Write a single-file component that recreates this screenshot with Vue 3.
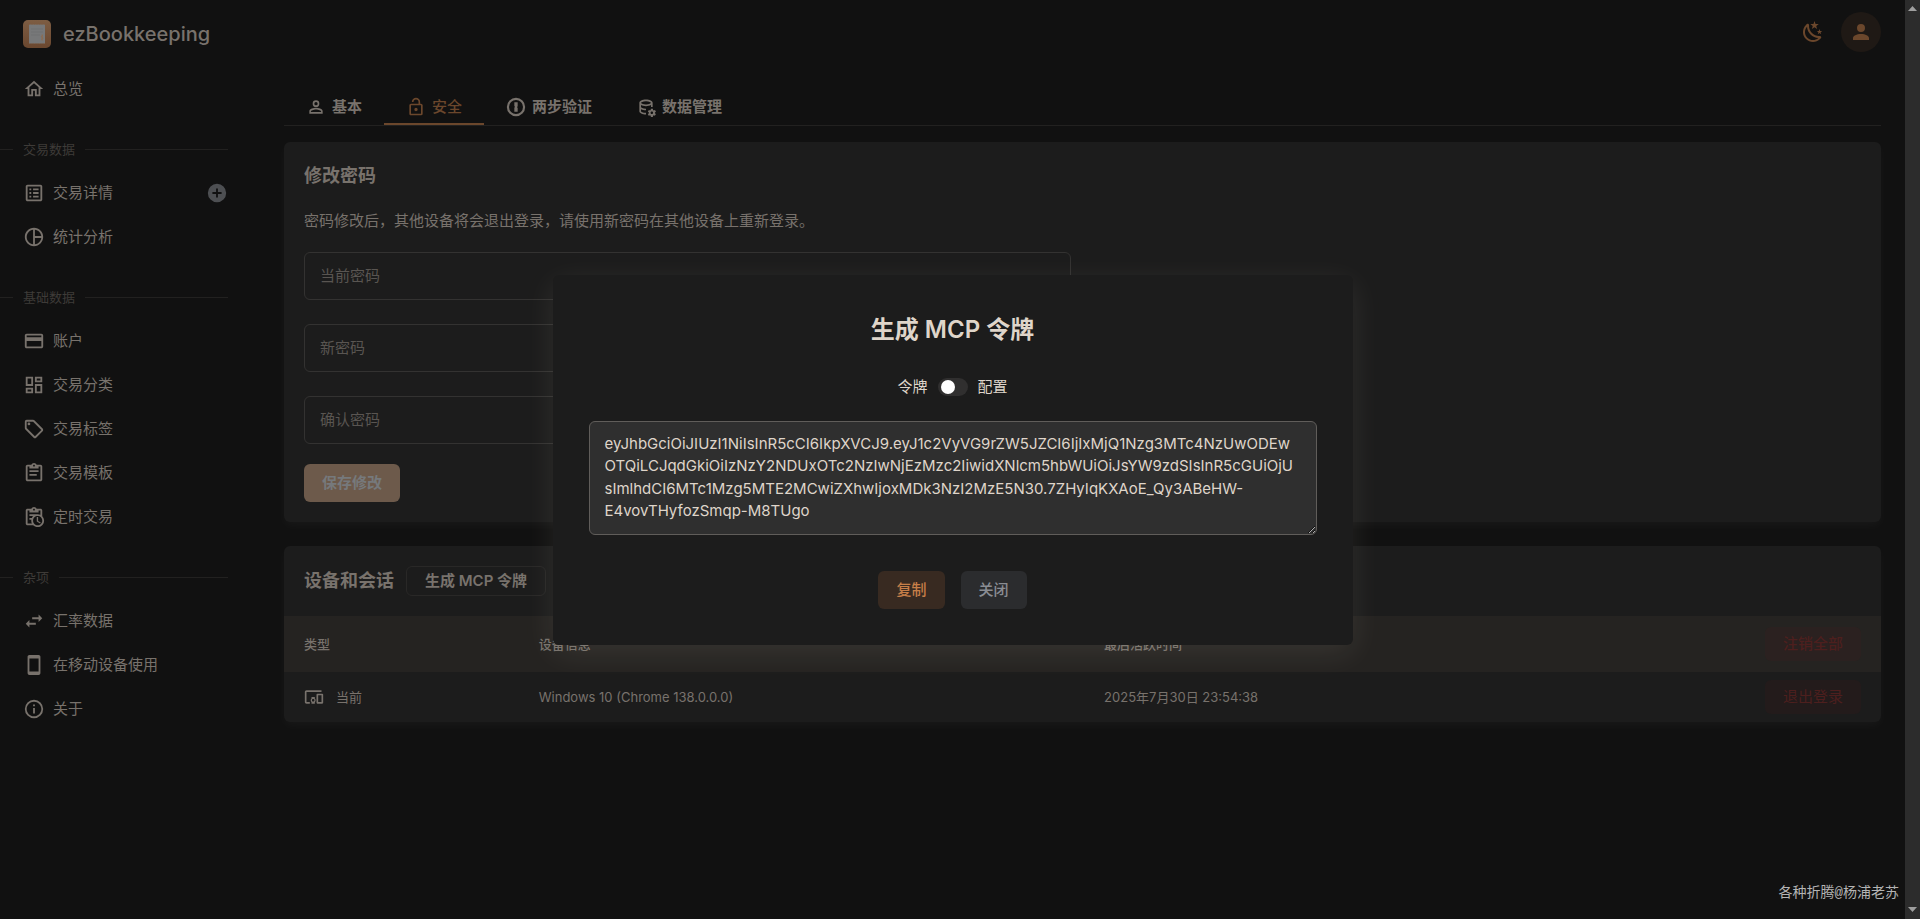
<script setup>
import { ref } from 'vue'

const icons = {
  home: 'M12 5.69L17 10.19V18H15V12H9V18H7V10.19L12 5.69M12 3L2 12H5V20H11V14H13V20H19V12H22L12 3',
  list: 'M11 15H17V17H11V15M9 7H7V9H9V7M11 13H17V11H11V13M11 9H17V7H11V9M9 11H7V13H9V11M21 5V19C21 20.1 20.1 21 19 21H5C3.89 21 3 20.1 3 19V5C3 3.9 3.9 3 5 3H19C20.1 3 21 3.9 21 5M19 5H5V19H19V5M9 15H7V17H9V15Z',
  pie: 'M12 2C6.48 2 2 6.48 2 12S6.48 22 12 22 22 17.52 22 12 17.52 2 12 2M13 4.07C16.61 4.52 19.5 7.39 19.93 11H13V4.07M4 12C4 7.94 7.07 4.56 11 4.07V19.93C7.07 19.44 4 16.06 4 12M13 19.93V13H19.93C19.5 16.61 16.64 19.5 13 19.93Z',
  card: 'M20 8H4V6H20M20 18H4V12H20M20 4H4C2.89 4 2 4.89 2 6V18C2 19.11 2.9 20 4 20H20C21.11 20 22 19.11 22 18V6C22 4.89 21.1 4 20 4Z',
  dashboard: 'M19 5V7H15V5H19M9 5V11H5V5H9M19 13V19H15V13H19M9 17V19H5V17H9M21 3H13V9H21V3M11 3H3V13H11V3M21 11H13V21H21V11M11 15H3V21H11V15Z',
  tag: 'M21.41 11.58L12.41 2.58A2 2 0 0 0 11 2H4A2 2 0 0 0 2 4V11A2 2 0 0 0 2.59 12.42L11.59 21.42A2 2 0 0 0 13 22A2 2 0 0 0 14.41 21.41L21.41 14.41A2 2 0 0 0 22 13A2 2 0 0 0 21.41 11.58M13 20L4 11V4H11L20 13M6.5 5A1.5 1.5 0 1 1 5 6.5A1.5 1.5 0 0 1 6.5 5Z',
  clipboard: 'M19 3H14.82C14.4 1.84 13.3 1 12 1S9.6 1.84 9.18 3H5C3.9 3 3 3.9 3 5V19C3 20.1 3.9 21 5 21H19C20.1 21 21 20.1 21 19V5C21 3.9 20.1 3 19 3M12 3C12.55 3 13 3.45 13 4S12.55 5 12 5 11 4.55 11 4 11.45 3 12 3M7 7H17V5H19V19H5V5H7V7M17 11H7V9H17V11M15 15H7V13H15V15Z',
  clipboardClock: 'M21 11.11V5C21 3.9 20.11 3 19 3H14.82C14.4 1.84 13.3 1 12 1S9.6 1.84 9.18 3H5C3.9 3 3 3.9 3 5V19C3 20.11 3.9 21 5 21H11.11C12.37 22.24 14.09 23 16 23C19.87 23 23 19.87 23 16C23 14.09 22.24 12.37 21 11.11M12 3C12.55 3 13 3.45 13 4S12.55 5 12 5 11 4.55 11 4 11.45 3 12 3M5 19V5H7V7H17V5H19V9.68C18.09 9.25 17.08 9 16 9H7V11H11.1C10.5 11.57 10.04 12.25 9.68 13H7V15H9.08C9.03 15.33 9 15.66 9 16C9 17.08 9.25 18.09 9.68 19H5M16 21C13.24 21 11 18.76 11 16S13.24 11 16 11 21 13.24 21 16 18.76 21 16 21M16.5 16.25L19.36 17.94L18.61 19.16L15 17V12H16.5V16.25Z',
  swap: 'M21 9L17 5V8H10V10H17V13M7 11L3 15L7 19V16H14V14H7V11Z',
  phone: 'M17,19H7V5H17M17,1H7C5.89,1 5,1.89 5,3V21A2,2 0 0,0 7,23H17A2,2 0 0,0 19,21V3C19,1.89 18.1,1 17,1Z',
  info: 'M11,9H13V7H11M12,20C7.59,20 4,16.41 4,12C4,7.59 7.59,4 12,4C16.41,4 20,7.59 20,12C20,16.41 16.41,20 12,20M12,2A10,10 0 0,0 2,12A10,10 0 0,0 12,22A10,10 0 0,0 22,12A10,10 0 0,0 12,2M11,17H13V11H11V17Z',
  plus: 'M17,13H13V17H11V13H7V11H11V7H13V11H17M12,2A10,10 0 0,0 2,12A10,10 0 0,0 12,22A10,10 0 0,0 22,12A10,10 0 0,0 12,2Z',
  accountOutline: 'M12,4A4,4 0 0,1 16,8A4,4 0 0,1 12,12A4,4 0 0,1 8,8A4,4 0 0,1 12,4M12,6A2,2 0 0,0 10,8A2,2 0 0,0 12,10A2,2 0 0,0 14,8A2,2 0 0,0 12,6M12,13C14.67,13 20,14.33 20,17V20H4V17C4,14.33 9.33,13 12,13M12,14.9C9.03,14.9 5.9,16.36 5.9,17V18.1H18.1V17C18.1,16.36 14.97,14.9 12,14.9Z',
  lock: 'M18,20V10H6V20H18M18,8A2,2 0 0,1 20,10V20A2,2 0 0,1 18,22H6C4.89,22 4,21.1 4,20V10A2,2 0 0,1 6,8H15V6A3,3 0 0,0 12,3A3,3 0 0,0 9,6H7A5,5 0 0,1 12,1A5,5 0 0,1 17,6V8H18M12,17A2,2 0 0,1 10,15A2,2 0 0,1 12,13A2,2 0 0,1 14,15A2,2 0 0,1 12,17Z',
  key: 'M12 1A11 11 0 0 0 12 23A11 11 0 0 0 12 1M12 3.6A8.4 8.4 0 0 1 12 20.4A8.4 8.4 0 0 1 12 3.6M10 6.4V11L10.9 11.8L10 12.8V17.6H14V13L13.1 12.2L14 11.2V6.4Z',
  database: 'M4 7V17C4 19.21 7.59 21 12 21V19C8.13 19 6 17.5 6 17V14.77C7.5 15.55 9.6 16 12 16V14C8.13 14 6 12.5 6 12V9.64C7.47 10.47 9.61 11 12 11S16.53 10.47 18 9.64V12H20V7C20 4.79 16.42 3 12 3S4 4.79 4 7M18 7C18 7.5 15.87 9 12 9S6 7.5 6 7 8.13 5 12 5 18 6.5 18 7M23.8 20.4C23.9 20.4 23.9 20.5 23.8 20.6L22.8 22.3C22.7 22.4 22.6 22.4 22.5 22.4L21.3 22C21 22.2 20.8 22.3 20.5 22.5L20.3 23.8C20.3 23.9 20.2 24 20.1 24H18.1C18 24 17.9 23.9 17.8 23.8L17.6 22.5C17.3 22.4 17 22.2 16.8 22L15.6 22.5C15.5 22.5 15.4 22.5 15.3 22.4L14.3 20.7C14.2 20.6 14.3 20.5 14.4 20.4L15.5 19.6V18.6L14.4 17.8C14.3 17.7 14.3 17.6 14.3 17.5L15.3 15.8C15.4 15.7 15.5 15.7 15.6 15.7L16.8 16.2C17.1 16 17.3 15.9 17.6 15.7L17.8 14.4C17.8 14.3 17.9 14.2 18.1 14.2H20.1C20.2 14.2 20.3 14.3 20.3 14.4L20.5 15.7C20.8 15.8 21.1 16 21.4 16.2L22.6 15.7C22.7 15.7 22.9 15.7 22.9 15.8L23.9 17.5C24 17.6 23.9 17.7 23.8 17.8L22.7 18.6V19.6L23.8 20.4M20.5 19C20.5 18.2 19.8 17.5 19 17.5S17.5 18.2 17.5 19 18.2 20.5 19 20.5 20.5 19.8 20.5 19Z',
  devices: 'M3 6H21V4H3C1.9 4 1 4.9 1 6V18C1 19.1 1.9 20 3 20H7V18H3V6M13 12H9V13.78C8.39 14.33 8 15.11 8 16C8 16.89 8.39 17.67 9 18.22V20H13V18.22C13.61 17.67 14 16.88 14 16S13.61 14.33 13 13.78V12M11 17.5C10.17 17.5 9.5 16.83 9.5 16S10.17 14.5 11 14.5 12.5 15.17 12.5 16 11.83 17.5 11 17.5M22 8H16C15.5 8 15 8.5 15 9V19C15 19.5 15.5 20 16 20H22C22.5 20 23 19.5 23 19V9C23 8.5 22.5 8 22 8M21 18H17V10H21V18Z',
  night: 'M17.75,4.09L15.22,6.03L16.13,9.09L13.5,7.28L10.87,9.09L11.78,6.03L9.25,4.09L12.44,4L13.5,1L14.56,4L17.75,4.09M21.25,11L19.61,12.25L20.2,14.23L18.5,13.06L16.8,14.23L17.39,12.25L15.75,11L17.81,10.95L18.5,9L19.19,10.95L21.25,11M18.97,15.95C19.8,15.87 20.69,17.05 20.16,17.8C19.84,18.25 19.5,18.67 19.08,19.07C15.17,23 8.84,23 4.94,19.07C1.03,15.17 1.03,8.83 4.94,4.93C5.34,4.53 5.76,4.17 6.21,3.85C6.96,3.32 8.14,4.21 8.06,5.04C7.79,7.9 8.75,10.87 10.95,13.06C13.14,15.26 16.1,16.22 18.97,15.95M17.33,17.97C14.5,17.81 11.7,16.64 9.53,14.5C7.36,12.31 6.2,9.5 6.04,6.68C3.23,9.82 3.34,14.64 6.35,17.66C9.37,20.67 14.19,20.78 17.33,17.97Z',
  account: 'M12,4A4,4 0 0,1 16,8A4,4 0 0,1 12,12A4,4 0 0,1 8,8A4,4 0 0,1 12,4M12,14C16.42,14 20,15.79 20,18V20H4V18C4,15.79 7.58,14 12,14Z',
}

const sections = [
  { title: '', items: [{ icon: 'home', text: '总览' }] },
  {
    title: '交易数据',
    items: [
      { icon: 'list', text: '交易详情', add: true },
      { icon: 'pie', text: '统计分析' },
    ],
  },
  {
    title: '基础数据',
    items: [
      { icon: 'card', text: '账户' },
      { icon: 'dashboard', text: '交易分类' },
      { icon: 'tag', text: '交易标签' },
      { icon: 'clipboard', text: '交易模板' },
      { icon: 'clipboardClock', text: '定时交易' },
    ],
  },
  {
    title: '杂项',
    items: [
      { icon: 'swap', text: '汇率数据' },
      { icon: 'phone', text: '在移动设备使用' },
      { icon: 'info', text: '关于' },
    ],
  },
]

const tabs = [
  { icon: 'accountOutline', text: '基本' },
  { icon: 'lock', text: '安全' },
  { icon: 'key', text: '两步验证' },
  { icon: 'database', text: '数据管理' },
]
const activeTab = ref('安全')
const fields = ['当前密码', '新密码', '确认密码']
const showConfig = ref(false)
const token = ref(
  'eyJhbGciOiJIUzI1NiIsInR5cCI6IkpXVCJ9.eyJ1c2VyVG9rZW5JZCI6IjIxMjQ1Nzg3MTc4NzUwODEwOTQiLCJqdGkiOiIzNzY2NDUxOTc2NzIwNjEzMzc2IiwidXNlcm5hbWUiOiJsYW9zdSIsInR5cGUiOjUsImlhdCI6MTc1Mzg5MTE2MCwiZXhwIjoxMDk3NzI2MzE5N30.7ZHyIqKXAoE_Qy3ABeHW-E4vovTHyfozSmqp-M8TUgo'
)
</script>

<template>
  <div class="window">
    <div class="page">
      <aside class="sidebar">
        <div class="brand">
          <svg class="logo" viewBox="0 0 28 28" aria-hidden="true">
            <defs>
              <linearGradient id="logoFill" x1="0" y1="0" x2="0" y2="1">
                <stop offset="0" stop-color="#7d5d43" />
                <stop offset="1" stop-color="#6a472f" />
              </linearGradient>
            </defs>
            <rect width="28" height="28" rx="5" fill="url(#logoFill)" />
            <path d="M6 4.500H22V23.500H6Z" fill="#777879" />
            <path d="M6 4.500H22M6 23.500H22" stroke="#7d6350" stroke-dasharray="1 1.500" />
            <path d="M8 9H20M8 12H20M8 15H17" stroke="#707172" />
            <path d="M20 15.500C18 15.500 18 17.500 19.300 17.500S20 19.500 18 19.200M19.200 14.500V20.500" fill="none" stroke="#8d6c50" />
          </svg>
          <span class="brand-name">ezBookkeeping</span>
        </div>
        <nav>
          <template v-for="(section, i) in sections" :key="i">
            <div v-if="section.title" class="section-title">
              <span>{{ section.title }}</span>
            </div>
            <div v-for="item in section.items" :key="item.text" class="nav-row">
              <a href="#" class="nav-link">
                <svg class="icon-nav" viewBox="0 0 24 24" aria-hidden="true"><path :d="icons[item.icon]" /></svg>
                <span>{{ item.text }}</span>
              </a>
              <button v-if="item.add" class="add" type="button" aria-label="添加交易">
                <svg class="icon-nav" viewBox="0 0 24 24" aria-hidden="true"><path :d="icons.plus" /></svg>
              </button>
            </div>
          </template>
        </nav>
      </aside>

      <main class="main">
        <header class="topbar">
          <button class="theme" type="button" aria-label="主题">
            <svg class="icon-top" viewBox="0 0 24 24" aria-hidden="true"><path :d="icons.night" /></svg>
          </button>
          <button class="avatar" type="button" aria-label="用户">
            <svg class="icon-top" viewBox="0 0 24 24" aria-hidden="true"><path :d="icons.account" /></svg>
          </button>
        </header>

        <div class="tabs" role="tablist">
          <button
            v-for="tab in tabs"
            :key="tab.text"
            type="button"
            role="tab"
            class="tab"
            :class="{ active: tab.text === activeTab }"
            :aria-selected="tab.text === activeTab"
            @click="activeTab = tab.text"
          >
            <svg class="icon-tab" viewBox="0 0 24 24" aria-hidden="true"><path fill-rule="evenodd" :d="icons[tab.icon]" /></svg>
            <span>{{ tab.text }}</span>
          </button>
        </div>

        <section class="card password">
          <h2>修改密码</h2>
          <p>密码修改后，其他设备将会退出登录，请使用新密码在其他设备上重新登录。</p>
          <form class="fields" @submit.prevent>
            <input v-for="f in fields" :key="f" type="password" :placeholder="f" :aria-label="f" autocomplete="off" />
          </form>
          <button type="button" class="btn save">保存修改</button>
        </section>

        <section class="card">
          <div class="card-head">
            <h2>设备和会话</h2>
            <button type="button" class="generate">生成 MCP 令牌</button>
          </div>
          <table>
            <thead>
              <tr>
                <th class="col-type">类型</th>
                <th class="col-info">设备信息</th>
                <th>最后活跃时间</th>
                <th class="col-action"><button type="button" class="danger">注销全部</button></th>
              </tr>
            </thead>
            <tbody>
              <tr>
                <td>
                  <div class="device">
                    <svg class="icon-device" viewBox="0 0 24 24" aria-hidden="true"><path :d="icons.devices" /></svg>
                    <span>当前</span>
                  </div>
                </td>
                <td>Windows 10 (Chrome 138.0.0.0)</td>
                <td>2025年7月30日 23:54:38</td>
                <td class="col-action"><button type="button" class="danger">退出登录</button></td>
              </tr>
            </tbody>
          </table>
        </section>
      </main>

      <div class="overlay">
        <div class="dialog" role="dialog" aria-labelledby="dialogTitle">
          <h1 id="dialogTitle">生成 MCP 令牌</h1>
          <div class="switch-row">
            <span>令牌</span>
            <input id="showConfig" v-model="showConfig" type="checkbox" role="switch" />
            <label for="showConfig">配置</label>
          </div>
          <textarea v-model="token" aria-label="令牌" readonly spellcheck="false"></textarea>
          <div class="actions">
            <button type="button" class="btn copy">复制</button>
            <button type="button" class="btn close">关闭</button>
          </div>
        </div>
      </div>

      <div class="watermark">各种折腾@杨浦老苏</div>
    </div>

    <div class="scrollbar" aria-hidden="true">
      <svg viewBox="0 0 15 15"><path d="M3 11L7.500 6L12 11Z" /></svg>
      <svg viewBox="0 0 15 15"><path d="M3 3L7.500 8L12 3Z" /></svg>
    </div>
  </div>
</template>

<style>
body {
  background: #111111;
}
</style>

<style scoped>
.window,
.window * {
  box-sizing: border-box;
}
.window {
  display: flex;
  min-height: 100vh;
  background: #111111;
  color: #78726c;
  font-family: Inter, "Noto Sans CJK SC", sans-serif;
  font-size: 15px;
  line-height: 22px;
}
button,
input,
textarea {
  margin: 0;
  font: inherit;
  color: inherit;
}
button {
  padding: 0;
  border: 0;
  background: none;
  cursor: pointer;
}
h1,
h2,
p {
  margin: 0;
}
svg {
  display: block;
  flex: none;
  fill: currentColor;
}
.page {
  position: relative;
  display: flex;
  flex: 1;
  min-width: 0;
}

.sidebar {
  width: 260px;
  flex: none;
}
.brand {
  display: flex;
  align-items: center;
  gap: 12px;
  height: 67px;
  padding-left: 23px;
}
.logo {
  width: 28px;
  height: 28px;
}
.brand-name {
  font-size: 20px;
  font-weight: 500;
  line-height: 28px;
}
.section-title {
  display: flex;
  align-items: center;
  gap: 10px;
  height: 44px;
  margin: 16px 32px 0 0;
  color: #3e3b38;
  font-size: 13px;
}
.section-title::before,
.section-title::after {
  content: "";
  height: 1px;
  background: #222120;
}
.section-title::before {
  width: 13px;
}
.section-title::after {
  flex: 1;
}
.nav-row {
  display: flex;
  align-items: center;
  justify-content: space-between;
  height: 44px;
  padding: 0 32px 0 23px;
}
.nav-link {
  display: flex;
  align-items: center;
  gap: 8px;
  color: inherit;
  text-decoration: none;
}
.icon-nav {
  width: 22px;
  height: 22px;
}
.add {
  color: #4d4f52;
}

.main {
  flex: 1;
  min-width: 0;
  padding: 0 24px;
}
.topbar {
  display: flex;
  align-items: center;
  justify-content: flex-end;
  gap: 16px;
  height: 64px;
  color: #6b472c;
}
.icon-top {
  width: 24px;
  height: 24px;
}
.avatar {
  display: flex;
  align-items: center;
  justify-content: center;
  width: 40px;
  height: 40px;
  border-radius: 50%;
  background: #1f1915;
}
.tabs {
  display: flex;
  height: 38px;
  margin: 24px 0 16px;
  border-bottom: 1px solid #222120;
}
.tab {
  display: flex;
  align-items: center;
  gap: 6px;
  padding: 2px 22px 0;
  border-bottom: 2px solid transparent;
  font-weight: 600;
}
.tab.active {
  border-bottom-color: #6b472c;
  color: #6b472c;
  font-weight: 500;
}
.icon-tab {
  width: 20px;
  height: 20px;
}

.card {
  overflow: hidden;
  margin-bottom: 24px;
  border-radius: 6px;
  background: #1c1c1c;
  box-shadow: 0 4px 10px rgba(255, 255, 255, 0.03);
}
.password {
  padding: 20px;
}
h2 {
  font-size: 18px;
  font-weight: 600;
  line-height: 28px;
}
.password p {
  margin: 20px 0;
}
.fields {
  display: grid;
  gap: 24px;
  width: calc(50% - 12px);
}
.fields input {
  height: 48px;
  padding: 0 15px 2px;
  border: 1px solid #333231;
  border-radius: 6px;
  background: transparent;
}
.fields input::placeholder {
  color: #595551;
  opacity: 1;
}
.btn {
  height: 38px;
  padding: 0 18px;
  border-radius: 6px;
  font-weight: 500;
}
.save {
  margin-top: 20px;
  background: #6d5a4b;
  color: #76797c;
  font-weight: 600;
}
.card-head {
  display: flex;
  align-items: center;
  gap: 12px;
  height: 70px;
  padding: 0 20px;
}
.generate {
  height: 30px;
  padding: 0 18px;
  border: 1px solid #292827;
  border-radius: 6px;
  font-weight: 600;
}
table {
  width: 100%;
  border-collapse: collapse;
  table-layout: fixed;
  font-size: 13px;
}
th,
td {
  height: 50px;
  padding: 0 20px;
  text-align: left;
  font-weight: 400;
}
th {
  height: 56px;
  background: #252321;
  font-weight: 500;
}
.col-type {
  width: 14.7%;
}
.col-info {
  width: 35.4%;
}
.col-action {
  text-align: right;
}
.device {
  display: flex;
  align-items: center;
  gap: 12px;
}
.icon-device {
  width: 20px;
  height: 20px;
}
.danger {
  height: 34px;
  padding: 0 18px;
  border-radius: 6px;
  background: rgba(110, 25, 25, 0.09);
  color: #4d1f1e;
  font-size: 15px;
}

.overlay {
  position: absolute;
  inset: 0;
  display: flex;
  align-items: center;
  justify-content: center;
}
.dialog {
  display: flex;
  flex-direction: column;
  align-items: center;
  width: 800px;
  max-width: 90%;
  padding: 36px;
  border-radius: 6px;
  background: #1c1c1c;
  box-shadow: 0 8px 32px rgba(252, 240, 227, 0.09);
  color: #dfd5ca;
}
h1 {
  font-size: 24px;
  font-weight: 600;
  line-height: 38px;
}
.switch-row {
  display: flex;
  align-items: center;
  gap: 10px;
  margin: 27px 0 23px;
}
.switch-row input {
  width: 30px;
  height: 18px;
  border-radius: 9px;
  background: #302f2f;
  appearance: none;
  cursor: pointer;
}
.switch-row input::before {
  content: "";
  display: block;
  width: 14px;
  height: 14px;
  margin: 2px 3px;
  border-radius: 50%;
  background: #ffffff;
}
.switch-row input:checked::before {
  margin-left: 13px;
}
textarea {
  width: 100%;
  height: 114px;
  padding: 11px 15px;
  border: 1px solid #605d5a;
  border-radius: 6px;
  outline: 0;
  background: #2f2f2f;
  line-height: 1.5;
  resize: vertical;
}
.actions {
  display: flex;
  gap: 16px;
  margin-top: 36px;
}
.copy {
  background: #382a21;
  color: #c67e48;
}
.close {
  background: #2b2c2e;
  color: #8a8d93;
}

.watermark {
  position: absolute;
  right: 6px;
  bottom: 15px;
  color: #b4b4b4;
  font-family: "Liberation Mono", "Noto Sans CJK SC", monospace;
  font-size: 14px;
}
.scrollbar {
  display: flex;
  flex-direction: column;
  justify-content: space-between;
  width: 15px;
  flex: none;
  background: #2c2c2c;
  color: #9f9f9f;
}
.scrollbar svg {
  width: 15px;
  height: 15px;
}
</style>
